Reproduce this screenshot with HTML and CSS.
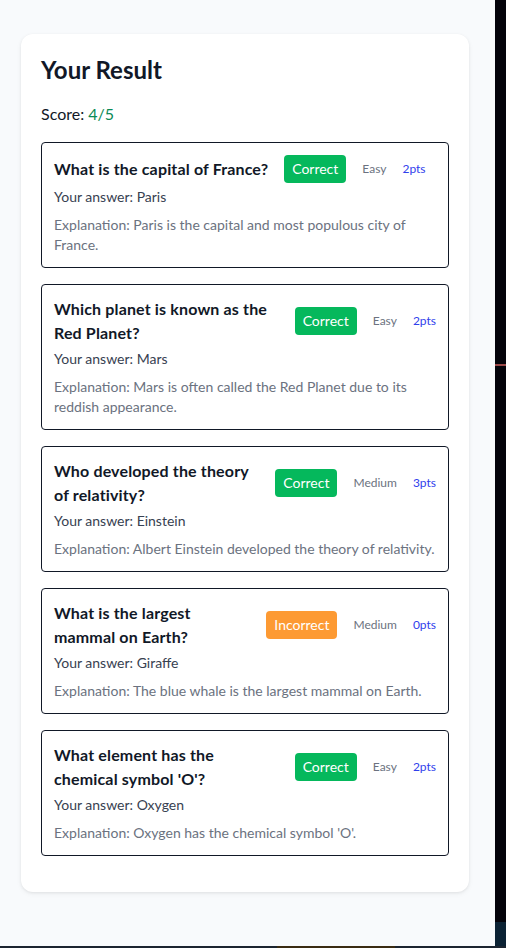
FILE: index.html
```html
<!DOCTYPE html>
<html lang="en">
<head>
<meta charset="utf-8">
<title>Your Result</title>
<link rel="stylesheet" href="styles.css">
</head>
<body>
<div class="screen">
  <div class="top">
    <main class="page">
      <section class="card">
        <h2 class="title">Your Result</h2>
        <p class="score">Score: <span class="score-value">4/5</span></p>

        <div class="item">
          <div class="item-head">
            <h3 class="question">What is the capital of France?</h3>
            <div class="meta">
              <span class="badge badge-correct">Correct</span>
              <span class="level">Easy</span>
              <span class="pts">2pts</span>
            </div>
          </div>
          <p class="answer">Your answer: Paris</p>
          <p class="explain">Explanation: Paris is the capital and most populous city of France.</p>
        </div>

        <div class="item">
          <div class="item-head">
            <h3 class="question">Which planet is known as the Red Planet?</h3>
            <div class="meta">
              <span class="badge badge-correct">Correct</span>
              <span class="level">Easy</span>
              <span class="pts">2pts</span>
            </div>
          </div>
          <p class="answer">Your answer: Mars</p>
          <p class="explain">Explanation: Mars is often called the Red Planet due to its reddish appearance.</p>
        </div>

        <div class="item">
          <div class="item-head">
            <h3 class="question">Who developed the theory of relativity?</h3>
            <div class="meta">
              <span class="badge badge-correct">Correct</span>
              <span class="level">Medium</span>
              <span class="pts">3pts</span>
            </div>
          </div>
          <p class="answer">Your answer: Einstein</p>
          <p class="explain">Explanation: Albert Einstein developed the theory of relativity.</p>
        </div>

        <div class="item">
          <div class="item-head">
            <h3 class="question">What is the largest mammal on Earth?</h3>
            <div class="meta">
              <span class="badge badge-incorrect">Incorrect</span>
              <span class="level">Medium</span>
              <span class="pts">0pts</span>
            </div>
          </div>
          <p class="answer">Your answer: Giraffe</p>
          <p class="explain">Explanation: The blue whale is the largest mammal on Earth.</p>
        </div>

        <div class="item">
          <div class="item-head">
            <h3 class="question">What element has the chemical symbol 'O'?</h3>
            <div class="meta">
              <span class="badge badge-correct">Correct</span>
              <span class="level">Easy</span>
              <span class="pts">2pts</span>
            </div>
          </div>
          <p class="answer">Your answer: Oxygen</p>
          <p class="explain">Explanation: Oxygen has the chemical symbol 'O'.</p>
        </div>
      </section>
    </main>
    <div class="edge"></div>
  </div>
  <div class="bottom"></div>
</div>
</body>
</html>
```

FILE: styles.css
```css
* { box-sizing: border-box; }

html, body {
  margin: 0;
  padding: 0;
}

body {
  font-family: Lato, "Open Sans", "Liberation Sans", sans-serif;
  color: #111827;
  background: #04030a;
}

.screen {
  display: flex;
  flex-direction: column;
  height: 948px;
  overflow: hidden;
}

.top {
  display: flex;
  flex: 1;
}

.page {
  width: 495px;
  flex: none;
  background: #f8fafc;
  padding: 34px 26px 0 21px;
}

.edge {
  flex: 1;
  background:
    linear-gradient(to bottom,
      #04030a 0, #04030a 364px,
      #9a4848 364px, #9a4848 366px,
      #04030a 366px, #04030a 922px,
      #0b2234 922px, #0b2234 100%);
}

.bottom {
  height: 2px;
  background: linear-gradient(to right, #1b2430 0, #1b2430 277px, #3a2b12 277px, #3a2b12 395px, #1b2430 395px);
}

.card {
  background: #ffffff;
  border-radius: 12px;
  box-shadow: 0 1px 3px rgba(0, 0, 0, 0.08), 0 2px 6px rgba(0, 0, 0, 0.04);
  padding: 20px 20px 20px;
}

.title {
  margin: 0 0 16px;
  font-size: 24px;
  line-height: 32px;
  font-weight: 700;
  color: #111827;
}

.score {
  margin: 0 0 16px;
  font-size: 16px;
  line-height: 24px;
  color: #111827;
}

.score-value {
  color: #0a8a55;
}

.item {
  border: 1px solid #111827;
  border-radius: 4px;
  padding: 12px;
  margin-bottom: 16px;
}

.item-head {
  display: flex;
  align-items: center;
  gap: 16px;
}

.question {
  margin: 0;
  font-size: 16px;
  line-height: 24px;
  font-weight: 700;
  letter-spacing: 0.15px;
  color: #111827;
  min-width: 0;
}

.meta {
  display: flex;
  align-items: center;
  gap: 16px;
  flex: none;
}

.badge {
  display: inline-block;
  padding: 4px 8px;
  border-radius: 4px;
  font-size: 14px;
  line-height: 20px;
  color: #ffffff;
}

.badge-correct { background: #05b85c; }
.badge-incorrect { background: #fd9a33; }

.level {
  font-size: 12px;
  line-height: 16px;
  color: #6b7280;
}

.pts {
  font-size: 12px;
  line-height: 16px;
  color: #3040ec;
}

.answer {
  margin: 4px 0 0;
  font-size: 14px;
  line-height: 20px;
  color: #374151;
}

.explain {
  margin: 8px 0 0;
  font-size: 14px;
  line-height: 20px;
  color: #6b7280;
}
```
